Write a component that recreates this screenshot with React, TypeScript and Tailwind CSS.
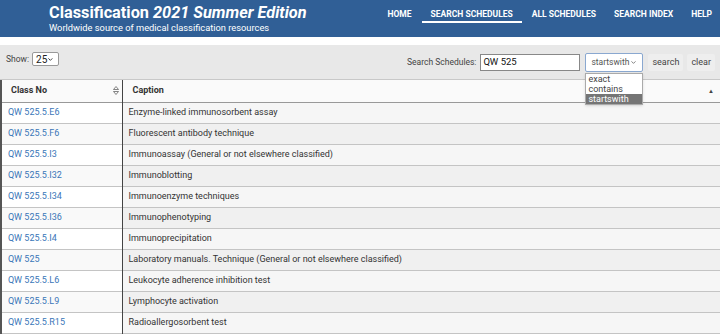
import { ChevronDown } from "lucide-react";

const rows = [
  ["QW 525.5.E6", "Enzyme-linked immunosorbent assay"],
  ["QW 525.5.F6", "Fluorescent antibody technique"],
  ["QW 525.5.I3", "Immunoassay (General or not elsewhere classified)"],
  ["QW 525.5.I32", "Immunoblotting"],
  ["QW 525.5.I34", "Immunoenzyme techniques"],
  ["QW 525.5.I36", "Immunophenotyping"],
  ["QW 525.5.I4", "Immunoprecipitation"],
  ["QW 525", "Laboratory manuals. Technique (General or not elsewhere classified)"],
  ["QW 525.5.L6", "Leukocyte adherence inhibition test"],
  ["QW 525.5.L9", "Lymphocyte activation"],
  ["QW 525.5.R15", "Radioallergosorbent test"],
];

function SortBoth() {
  return (
    <svg width="6" height="9" viewBox="0 0 6 9" className="text-[#666]">
      <path d="M3 0.5 L5.5 3.5 H0.5 Z M3 8.5 L5.5 5.5 H0.5 Z" fill="none" stroke="currentColor" strokeWidth="0.8" />
    </svg>
  );
}

export default function App() {
  return (
    <div className="w-[720px] h-[334px] overflow-hidden bg-white font-['Roboto',sans-serif] text-[#333]">
      {/* header */}
      <header className="h-[37px] bg-[#305f96] flex items-start justify-between pl-[49px] pr-[8px]">
        <div className="pt-[3px] text-white">
          <h1 className="text-[16.3px] font-bold leading-[19px]">
            Classification <span className="italic">2021 Summer Edition</span>
          </h1>
          <p className="text-[9.3px] leading-[11px]">Worldwide source of medical classification resources</p>
        </div>
        <nav className="flex items-start pt-[9px] text-white text-[8.5px] font-bold leading-[10px]">
          <a className="mr-[10px]">HOME</a>
          <a className="px-[9px] pb-[2px] border-b-2 border-white mr-[10px]">SEARCH SCHEDULES</a>
          <a className="mr-[18px]">ALL SCHEDULES</a>
          <a className="mr-[18px]">SEARCH INDEX</a>
          <a>HELP</a>
        </nav>
      </header>

      <div className="h-[8px] bg-white" />

      {/* toolbar */}
      <div className="h-[34px] bg-[#e8e8e8] flex items-start justify-between pl-[6px] pr-[5px] text-[8.5px] text-[#444]">
        <div className="flex items-center gap-[3px] pt-[7px]">
          <span>Show:</span>
          <div className="w-[27px] h-[14px] bg-white border border-[#999] rounded-[2px] flex items-center justify-between pl-[3px] pr-[4px] text-[10px] text-[#222]">
            <span>25</span>
            <ChevronDown size={7} strokeWidth={3} />
          </div>
        </div>
        <div className="flex items-center pt-[8px]">
          <span className="mr-[4px]">Search Schedules:</span>
          <div className="w-[100px] h-[17px] bg-white border border-[#888] flex items-center px-[2px] text-[9.5px] text-[#111]">QW 525</div>
          <div className="relative ml-[5px]">
            <div className="w-[58px] h-[19px] bg-white border border-[#8aa8d0] rounded-[2px] flex items-center justify-between pl-[5px] pr-[5px] text-[8.5px] text-[#555]">
              <span>startswith</span>
              <ChevronDown size={7} strokeWidth={2.5} />
            </div>
            <div className="absolute left-0 top-[20px] w-[58px] bg-white border border-[#aaa] shadow-sm text-[9px] leading-[10px] text-[#444] z-10">
              <div className="px-[2px]">exact</div>
              <div className="px-[2px]">contains</div>
              <div className="px-[2px] bg-[#757575] text-white">startswith</div>
            </div>
          </div>
          <button className="ml-[5px] h-[17px] px-[4px] bg-[#eeeeee] rounded-[2px] text-[9px] text-[#444]">search</button>
          <button className="ml-[4px] h-[17px] px-[4px] bg-[#eeeeee] rounded-[2px] text-[9px] text-[#444]">clear</button>
        </div>
      </div>

      {/* table */}
      <div className="h-[1px] bg-[#c8c8c8]" />
      <table className="w-[722px] border-collapse text-[9px] border-l-2 border-[#555]">
        <thead>
          <tr className="h-[22px] bg-[#fafafa] border-b border-[#999]">
            <th className="w-[121px] pl-[9px] pr-[3px] text-left font-bold text-[#333] border-r border-[#444]">
              <div className="flex items-center justify-between">
                <span>Class No</span>
                <SortBoth />
              </div>
            </th>
            <th className="pl-[10px] pr-[8px] text-left font-bold text-[#333]">
              <div className="flex items-center justify-between">
                <span>Caption</span>
                <span className="text-[6px] text-[#444]">▲</span>
              </div>
            </th>
          </tr>
        </thead>
        <tbody>
          {rows.map(([c, t], i) => (
            <tr key={c} className={"h-[21px] border-b border-[#c4c4c4] " + (i % 2 === 0 ? "bg-white" : "bg-[#f9f9f9]")}>
              <td className="pl-[6px] text-[#3a76b8] border-r border-[#444]">{c}</td>
              <td className={"pl-[6px] text-[#333] " + (i % 2 === 0 ? "bg-[#f6f6f6]" : "bg-[#f0f0f0]")}>{t}</td>
            </tr>
          ))}
        </tbody>
      </table>
    </div>
  );
}
